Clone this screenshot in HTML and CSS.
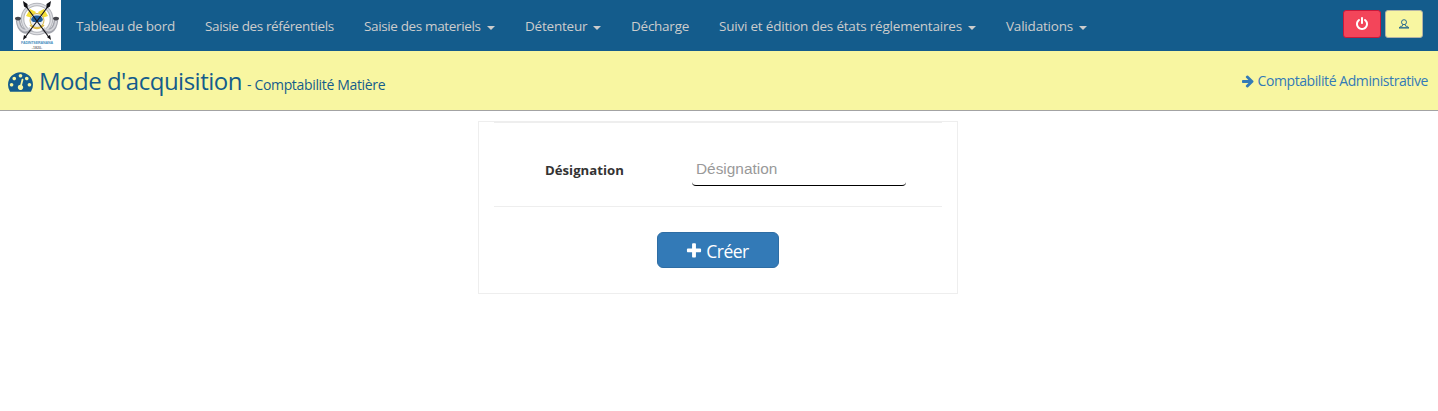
FILE: index.html
```
<!DOCTYPE html>
<html lang="fr">
<head>
<meta charset="utf-8">
<title>Mode d'acquisition</title>
<link rel="stylesheet" href="styles.css">
</head>
<body>
<nav class="navbar">
  <svg class="logo" viewBox="0 0 48 50">
    <rect width="48" height="50" fill="#fff"/>
    <circle cx="24" cy="19" r="14.500" fill="none" stroke="#b4b6bc" stroke-width="3.600"/>
    <circle cx="24" cy="19" r="14.500" fill="none" stroke="#dedfe3" stroke-width="1.500"/>
    <path d="M5 20C6 31 13 34 18 29M43 20C42 31 35 34 30 29" fill="none" stroke="#a2a4ac" stroke-width="4.500"/>
    <path d="M5 21C6 30 12 33 17 28M43 21C42 30 36 33 31 28" fill="none" stroke="#d3d4d9" stroke-width="2"/>
    <ellipse cx="5" cy="18.500" rx="3" ry="1.800" fill="#45464c"/>
    <ellipse cx="43" cy="18.500" rx="3" ry="1.800" fill="#45464c"/>
    <path d="M13 16L17 9L23 12L19 18ZM35 16L31 9L25 12L29 18Z" fill="#f4df38"/>
    <circle cx="24" cy="20.500" r="7" fill="#e9edf0" stroke="#d8b84c"/>
    <path d="M18 20Q19 15 24 15.500Q29 15 30 20L28 22H20Z" fill="#215f9b"/>
    <path d="M17 25Q24 32 31 25" fill="none" stroke="#dfbd44" stroke-width="1.500"/>
    <path d="M12 5L36.500 38M36 5L11.500 38" stroke="#17171b" stroke-width="1.200"/>
    <path d="M10 1L14.500 4L14.500 8.500L11 6.500ZM38 1L33.500 4L33.500 8.500L37 6.500ZM10 40L11 35L14 37ZM38 40L37 35L34 37Z" fill="#111116"/>
    <text x="24" y="44.300" text-anchor="middle" textLength="32" class="logo-name">FADINTSERANANA</text>
    <text x="24" y="49" text-anchor="middle" class="logo-year">-1820-</text>
  </svg>
  <ul class="menu">
    <li class="w-tableau"><span>Tableau de bord</span></li>
    <li class="w-referentiels"><span>Saisie des référentiels</span></li>
    <li class="w-materiels"><span>Saisie des materiels</span><i class="caret"></i></li>
    <li class="w-detenteur"><span>Détenteur</span><i class="caret"></i></li>
    <li class="w-decharge"><span>Décharge</span></li>
    <li class="w-suivi"><span>Suivi et édition des états réglementaires</span><i class="caret"></i></li>
    <li class="w-validations"><span>Validations</span><i class="caret"></i></li>
  </ul>
  <div class="actions">
    <button class="btn-power" aria-label="Déconnexion"><svg viewBox="0 0 1792 1792" width="14" height="14"><path fill="currentColor" d="M1664 896q0 156-61 298t-164 245-245 164-298 61-298-61-245-164-164-245-61-298q0-182 80.500-343t226.500-270q43-32 95.500-25t83.500 50q32 42 24.500 94.500t-49.500 84.500q-98 74-151.500 181t-53.500 228q0 104 40.500 198.500t109.500 163.500 163.500 109.500 198.500 40.500 198.500-40.500 163.500-109.500 109.500-163.500 40.500-198.500q0-121-53.500-228t-151.500-181q-42-32-49.500-84.500t24.500-94.500q31-43 84-50t95 25q146 109 226.500 270t80.500 343zm-640-768v640q0 52-38 90t-90 38-90-38-38-90v-640q0-52 38-90t90-38 90 38 38 90z"/></svg></button>
    <button class="btn-user" aria-label="Profil"><svg viewBox="0 0 10 10" width="10" height="10"><circle cx="5" cy="3.200" r="2.500" fill="none" stroke="currentColor" stroke-width=".9"/><path d="M3.900 5.500L3.200 7.300H1.500L.6 8.500M6.100 5.500L6.800 7.300H8.500L9.400 8.500" fill="none" stroke="currentColor" stroke-width=".8"/><path d="M0 9.500V8.200H10V9.500Z" fill="currentColor"/></svg></button>
  </div>
</nav>
<header class="heading">
  <div class="title">
    <svg class="gauge" viewBox="0 256 1792 1408" width="25" height="20"><path fill="currentColor" d="M384 1152q0-53-37.500-90.500t-90.500-37.500-90.500 37.500-37.500 90.500 37.500 90.500 90.500 37.500 90.500-37.500 37.500-90.500zm192-448q0-53-37.500-90.500t-90.500-37.500-90.500 37.500-37.500 90.500 37.500 90.500 90.500 37.500 90.500-37.500 37.500-90.500zm428 481l101-382q6-26-7.500-48.500t-38.500-29.500-48 6.500-30 39.500l-101 382q-60 5-107 43.500t-63 98.500q-20 77 20 146t117 89 146-20 89-117q16-60-6-117t-72-91zm660-33q0-53-37.500-90.500t-90.500-37.500-90.500 37.500-37.500 90.500 37.500 90.500 90.500 37.500 90.500-37.500 37.500-90.500zm-640-640q0-53-37.500-90.500t-90.500-37.500-90.500 37.500-37.500 90.500 37.500 90.500 90.500 37.500 90.500-37.500 37.500-90.500zm448 192q0-53-37.500-90.500t-90.500-37.500-90.500 37.500-37.500 90.500 37.500 90.500 90.500 37.500 90.500-37.500 37.500-90.500zm320 448q0 261-141 483-19 29-54 29h-1402q-35 0-54-29-141-221-141-483 0-182 71-348t191-286 286-191 348-71 348 71 286 191 191 286 71 348z"/></svg>
    <h1>Mode d'acquisition</h1>
    <span class="subtitle">- Comptabilité Matière</span>
  </div>
  <a class="switch"><svg viewBox="0 0 1792 1792" width="14" height="14"><path fill="currentColor" d="M1600 960q0 54-37 91l-651 651q-39 37-91 37-51 0-90-37l-75-75q-38-38-38-91t38-91l293-293h-704q-52 0-84.500-37.500t-32.500-90.500v-128q0-53 32.500-90.500t84.500-37.500h704l-293-294q-38-36-38-90t38-90l75-75q38-38 90-38 53 0 91 38l651 651q37 35 37 90z"/></svg><span>Comptabilité Administrative</span></a>
</header>
<main class="panel">
  <form class="form">
    <div class="row">
      <label for="designation">Désignation</label>
      <input id="designation" type="text" placeholder="Désignation">
    </div>
    <div class="footer">
      <button type="button" class="btn-create"><svg viewBox="0 0 1792 1792" width="18" height="18"><path fill="currentColor" d="M1600 736v192q0 40-28 68t-68 28h-416v416q0 40-28 68t-68 28h-192q-40 0-68-28t-28-68v-416h-416q-40 0-68-28t-28-68v-192q0-40 28-68t68-28h416v-416q0-40 28-68t68-28h192q40 0 68 28t28 68v416h416q40 0 68 28t28 68z"/></svg><span>Créer</span></button>
    </div>
  </form>
</main>
</body>
</html>
```
FILE: styles.css
```
* { box-sizing: border-box; }
body {
  margin: 0;
  background: #fff;
  color: #333;
  font: 14px/20px "Open Sans", "Noto Sans", sans-serif;
}
button { font-family: inherit; padding: 0; display: flex; align-items: center; justify-content: center; }
svg { display: block; flex: none; }

.navbar {
  height: 51px;
  display: flex;
  align-items: flex-start;
  padding: 0 15px 0 13px;
  background: #145c8c;
}
.logo { width: 48px; height: 50px; }
.logo-name { font: bold 3.6px "Liberation Sans", sans-serif; fill: #4b8fc0; }
.logo-year { font: bold 3.6px "Liberation Sans", sans-serif; fill: #777; }
.menu {
  display: flex;
  list-style: none;
  margin: 0;
  padding: 16px 0 0;
  color: #ccc;
}
.menu li { display: flex; align-items: center; justify-content: space-between; margin: 0 15px; white-space: nowrap; }
.menu span { font-size: 13.5px; }
.w-tableau { width: 99px; letter-spacing: -0.27px; }
.w-referentiels { width: 129px; letter-spacing: -0.37px; }
.w-materiels { width: 131px; letter-spacing: -0.36px; }
.w-detenteur { width: 76px; letter-spacing: -0.22px; }
.w-decharge { width: 58px; letter-spacing: -0.25px; }
.w-suivi { width: 257px; letter-spacing: -0.21px; }
.w-validations { width: 81px; letter-spacing: -0.2px; }
.caret { border: 4px solid transparent; border-top-color: #ccc; border-bottom: 0; margin-top: 3px; }

.actions { display: flex; gap: 4px; margin: 10px 0 0 auto; }
.actions button { width: 38px; height: 28px; border: 1px solid; border-radius: 3px; }
.actions .btn-power { background: #f3455a; border-color: #c9183a; color: #fff; }
.actions .btn-power svg { margin-bottom: 1px; }
.actions .btn-user { background: #f8f6a1; border-color: #b3b3a6; color: #145c8c; }

.heading {
  height: 60px;
  display: flex;
  justify-content: space-between;
  padding: 0 10px 0 8px;
  background: #f8f6a1;
  border-bottom: 1px solid #a3a3a3;
}
.title { display: flex; align-items: baseline; color: #145c8c; padding-top: 14px; }
.gauge { align-self: flex-start; margin: 7px 6px 0 0; }
.title h1 { margin: 0; font-size: 24px; line-height: 32px; font-weight: 400; letter-spacing: -0.5px; width: 203px; white-space: nowrap; }
.subtitle { margin-left: 5px; white-space: nowrap; letter-spacing: -0.34px; }
.switch { display: flex; align-items: center; gap: 3px; height: 20px; margin-top: 20px; color: #337ab7; }
.switch span { letter-spacing: -0.42px; }

.panel { width: 480px; height: 173px; margin: 10px auto 0; border: 1px solid #eee; position: relative; left: -1px; }
.form { padding: 0 15px; }
.row {
  display: flex;
  height: 85px;
  border-top: 1px solid #eee;
  border-bottom: 1px solid #eee;
  padding: 29px 36px 0 51px;
  justify-content: space-between;
}
.row label { font-weight: 700; font-size: 13.2px; padding-top: 8px; }
.row input {
  width: 214px;
  height: 34px;
  border: 0;
  border-bottom: 1px solid #000;
  border-radius: 4px;
  padding: 0 4px;
  background: #fff;
  font: 15.4px "Liberation Sans", Arial, sans-serif;
}
.row input::placeholder { color: #999; opacity: 1; }
.footer { display: flex; justify-content: center; padding-top: 25px; }
.btn-create {
  width: 122px;
  height: 36px;
  gap: 3px;
  padding-right: 2px;
  border: 1px solid #2e6da4;
  border-radius: 6px;
  background: #337ab7;
  color: #fff;
  font-size: 17.5px;
  letter-spacing: -0.5px;
}
.btn-create svg { margin-top: 2px; }
.btn-create span { padding-top: 2px; }
```
